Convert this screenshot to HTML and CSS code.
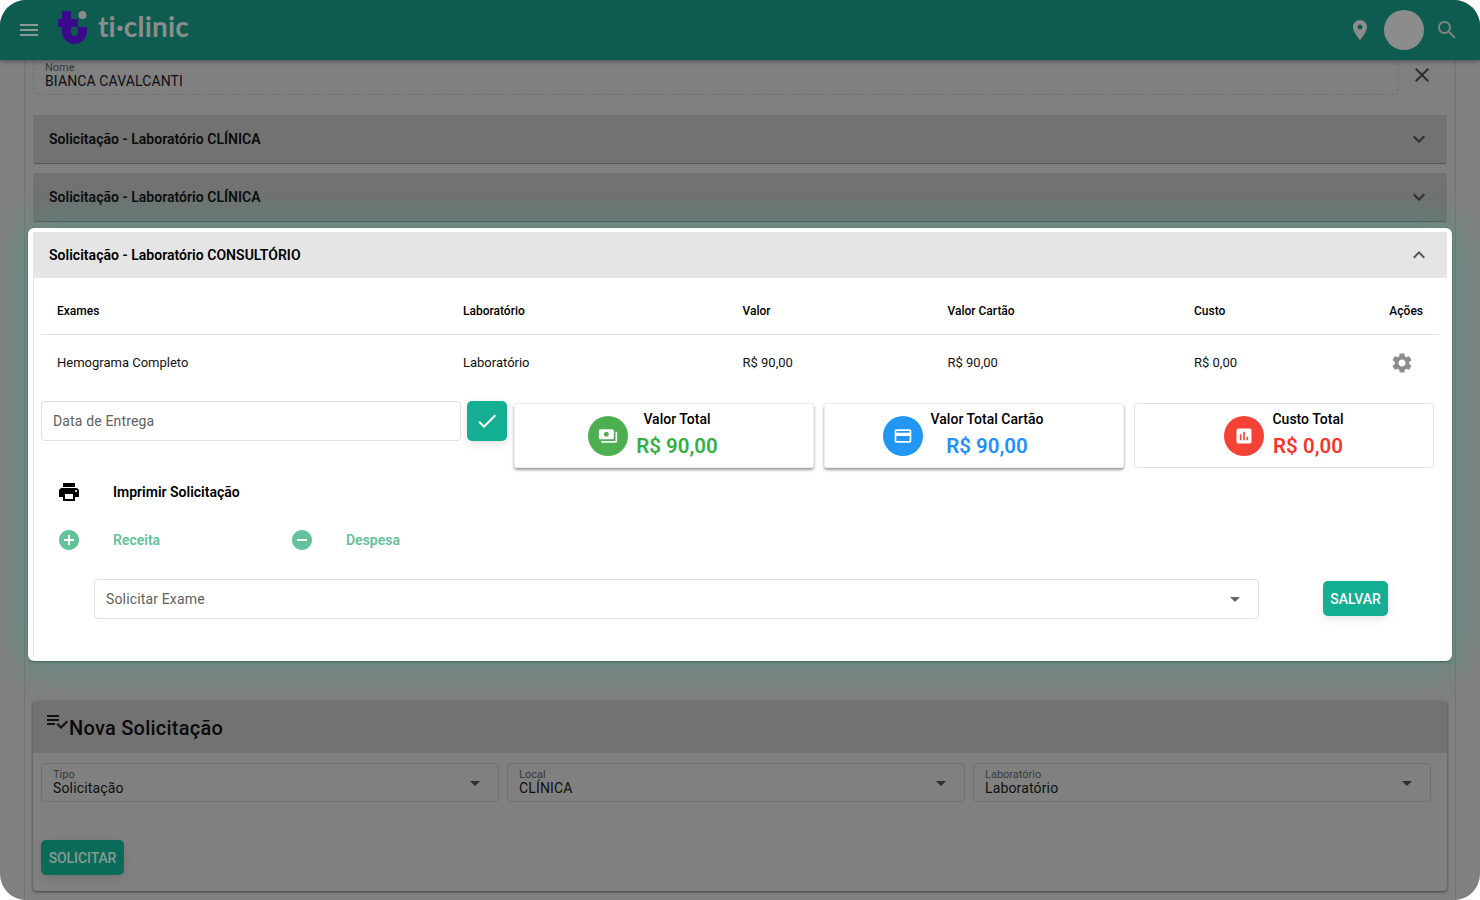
FILE: index.html
```html
<!DOCTYPE html>
<html lang="pt-BR">
  <head>
    <meta charset="UTF-8" />
    <title>ti-clinic</title>
    <link rel="stylesheet" href="styles.css">
  </head>
  <body>
    <div class="window">
      <header class="topbar">
        <svg class="icon menu-icon" viewBox="0 0 24 24"><path d="M3 18h18v-2H3v2zm0-5h18v-2H3v2zm0-7v2h18V6H3z"/></svg>
        <svg class="logo-mark" viewBox="0 0 29 33">
          <path d="M4 0h9v8h7v8h9v4.500a12.500 12.500 0 0 1-25 0V16H0V8h4z" fill="#3b0a8c"/>
          <path d="M13 16h7v5.500a3.500 3.500 0 0 1-7 0z" fill="#0d5c4f"/>
          <circle cx="24.500" cy="4" r="4" fill="#8c8c8c"/>
        </svg>
        <span class="logo-text">ti·clinic</span>
        <div class="topbar-right">
          <svg class="icon place-icon" viewBox="0 0 24 24"><path d="M12 2C8.130 2 5 5.130 5 9c0 5.250 7 13 7 13s7-7.750 7-13c0-3.870-3.130-7-7-7zm0 9.500c-1.380 0-2.500-1.120-2.500-2.500s1.120-2.500 2.500-2.500 2.500 1.120 2.500 2.500-1.120 2.500-2.500 2.500z"/></svg>
          <div class="avatar"></div>
          <svg class="icon search-icon" viewBox="0 0 24 24"><path d="M15.500 14h-.79l-.28-.27C15.410 12.590 16 11.110 16 9.500 16 5.910 13.090 3 9.500 3S3 5.910 3 9.500 5.910 16 9.500 16c1.610 0 3.090-.59 4.230-1.570l.27.28v.79l5 4.990L20.490 19l-4.990-5zm-6 0C7.010 14 5 11.990 5 9.500S7.010 5 9.500 5 14 7.010 14 9.500 11.990 14 9.500 14z"/></svg>
        </div>
      </header>

      <main class="content">
        <div class="patient-row">
          <div class="patient-field">
            <label>Nome</label>
            <div class="patient-name">BIANCA CAVALCANTI</div>
          </div>
          <svg class="icon close-icon" viewBox="0 0 24 24"><path d="M19 6.410L17.590 5 12 10.590 6.410 5 5 6.410 10.590 12 5 17.590 6.410 19 12 13.410 17.590 19 19 17.590 13.410 12z"/></svg>
        </div>

        <div class="acc-closed">
          <span>Solicitação - Laboratório CLÍNICA</span>
          <svg class="icon chev" viewBox="0 0 24 24"><path d="M16.590 8.590L12 13.170 7.410 8.590 6 10l6 6 6-6z"/></svg>
        </div>
        <div class="acc-closed">
          <span>Solicitação - Laboratório CLÍNICA</span>
          <svg class="icon chev" viewBox="0 0 24 24"><path d="M16.590 8.590L12 13.170 7.410 8.590 6 10l6 6 6-6z"/></svg>
        </div>

        <section class="acc-open">
          <div class="acc-open-header">
            <span>Solicitação - Laboratório CONSULTÓRIO</span>
            <svg class="icon chev" viewBox="0 0 24 24"><path d="M12 8l-6 6 1.410 1.410L12 10.830l4.590 4.580L18 14z"/></svg>
          </div>
          <div class="acc-open-body">
            <table class="exam-table">
              <thead>
                <tr>
                  <th class="col-exame">Exames</th>
                  <th class="col-lab">Laboratório</th>
                  <th class="col-valor">Valor</th>
                  <th class="col-cartao">Valor Cartão</th>
                  <th class="col-custo">Custo</th>
                  <th class="col-acoes">Ações</th>
                </tr>
              </thead>
              <tbody>
                <tr>
                  <td>Hemograma Completo</td>
                  <td>Laboratório</td>
                  <td>R$ 90,00</td>
                  <td>R$ 90,00</td>
                  <td>R$ 0,00</td>
                  <td class="col-acoes">
                    <svg class="gear" viewBox="0 0 24 24"><path d="M19.140 12.940c.04-.3.06-.61.06-.94 0-.32-.02-.64-.07-.94l2.030-1.580c.18-.14.23-.41.12-.61l-1.920-3.320c-.12-.22-.37-.29-.59-.22l-2.390.96c-.5-.38-1.030-.7-1.620-.94l-.36-2.540c-.04-.24-.24-.41-.48-.41h-3.840c-.24 0-.43.17-.47.41l-.36 2.540c-.59.24-1.130.57-1.620.94l-2.390-.96c-.22-.08-.47 0-.59.22L2.740 8.870c-.12.21-.08.47.12.61l2.030 1.580c-.05.3-.09.63-.09.94s.02.64.07.94l-2.030 1.580c-.18.14-.23.41-.12.61l1.920 3.320c.12.22.37.29.59.22l2.390-.96c.5.38 1.030.7 1.620.94l.36 2.540c.05.24.24.41.48.41h3.840c.24 0 .44-.17.47-.41l.36-2.540c.59-.24 1.130-.56 1.620-.94l2.390.96c.22.08.47 0 .59-.22l1.920-3.320c.12-.22.07-.47-.12-.61l-2.010-1.580zM12 15.600c-1.980 0-3.600-1.620-3.600-3.600s1.620-3.600 3.600-3.600 3.600 1.620 3.600 3.600-1.620 3.600-3.600 3.600z"/></svg>
                  </td>
                </tr>
              </tbody>
            </table>

            <div class="totals-row">
              <div class="date-input">Data de Entrega</div>
              <button class="check-btn">
                <svg viewBox="0 0 24 24"><path d="M9 16.170L4.830 12l-1.420 1.410L9 19 21 7l-1.410-1.410z"/></svg>
              </button>
              <div class="total-card raised">
                <div class="total-circle green">
                  <svg viewBox="0 0 24 24"><path d="M19 14V6c0-1.100-.9-2-2-2H3c-1.100 0-2 .9-2 2v8c0 1.100.9 2 2 2h14c1.100 0 2-.9 2-2zm-9-1c-1.660 0-3-1.340-3-3s1.340-3 3-3 3 1.340 3 3-1.340 3-3 3zm13-6v11c0 1.100-.9 2-2 2H4v-2h17V7h2z"/></svg>
                </div>
                <div class="total-text">
                  <div class="total-label">Valor Total</div>
                  <div class="total-value green-text">R$ 90,00</div>
                </div>
              </div>
              <div class="total-card raised">
                <div class="total-circle blue">
                  <svg viewBox="0 0 24 24"><path d="M20 4H4c-1.110 0-1.990.89-1.990 2L2 18c0 1.110.89 2 2 2h16c1.110 0 2-.89 2-2V6c0-1.110-.89-2-2-2zm0 14H4v-6h16v6zm0-10H4V6h16v2z"/></svg>
                </div>
                <div class="total-text">
                  <div class="total-label">Valor Total Cartão</div>
                  <div class="total-value blue-text">R$ 90,00</div>
                </div>
              </div>
              <div class="total-card">
                <div class="total-circle red">
                  <svg viewBox="0 0 24 24"><path d="M19 3H5c-1.100 0-2 .9-2 2v14c0 1.100.9 2 2 2h14c1.100 0 2-.9 2-2V5c0-1.100-.9-2-2-2zM9 17H7v-7h2v7zm4 0h-2V7h2v10zm4 0h-2v-4h2v4z"/></svg>
                </div>
                <div class="total-text">
                  <div class="total-label">Custo Total</div>
                  <div class="total-value red-text">R$ 0,00</div>
                </div>
              </div>
            </div>

            <div class="action-row print-row">
              <svg class="action-icon black" viewBox="0 0 24 24"><path d="M19 8H5c-1.660 0-3 1.340-3 3v6h4v4h12v-4h4v-6c0-1.660-1.340-3-3-3zm-3 11H8v-5h8v5zm3-7c-.55 0-1-.45-1-1s.45-1 1-1 1 .45 1 1-.45 1-1 1zm-1-9H6v4h12V3z"/></svg>
              <span class="action-label">Imprimir Solicitação</span>
            </div>
            <div class="action-row money-row">
              <div class="money-item">
                <svg class="action-icon mint" viewBox="0 0 24 24"><path d="M12 2C6.480 2 2 6.480 2 12s4.480 10 10 10 10-4.480 10-10S17.520 2 12 2zm5 11h-4v4h-2v-4H7v-2h4V7h2v4h4v2z"/></svg>
                <span class="action-label mint-text">Receita</span>
              </div>
              <div class="money-item">
                <svg class="action-icon mint" viewBox="0 0 24 24"><path d="M12 2C6.480 2 2 6.480 2 12s4.480 10 10 10 10-4.480 10-10S17.520 2 12 2zm5 11H7v-2h10v2z"/></svg>
                <span class="action-label mint-text">Despesa</span>
              </div>
            </div>

            <div class="request-row">
              <div class="request-select">
                <span>Solicitar Exame</span>
                <svg class="icon drop" viewBox="0 0 24 24"><path d="M7 10l5 5 5-5z"/></svg>
              </div>
              <button class="save-btn">SALVAR</button>
            </div>
          </div>
        </section>

        <section class="new-card">
          <div class="new-card-header">
            <svg class="icon list-icon" viewBox="0 0 24 24"><path d="M14 10H2v2h12v-2zm0-4H2v2h12V6zM2 16h8v-2H2v2zm19.500-4.500L23 13l-6.990 7-4.510-4.500L13 14l3.010 3 5.490-5.500z"/></svg>
            <h2>Nova Solicitação</h2>
          </div>
          <div class="new-card-body">
            <div class="select-grid">
              <div class="dim-select">
                <div>
                  <label>Tipo</label>
                  <div class="dim-value">Solicitação</div>
                </div>
                <svg class="icon drop dark" viewBox="0 0 24 24"><path d="M7 10l5 5 5-5z"/></svg>
              </div>
              <div class="dim-select">
                <div>
                  <label>Local</label>
                  <div class="dim-value">CLÍNICA</div>
                </div>
                <svg class="icon drop dark" viewBox="0 0 24 24"><path d="M7 10l5 5 5-5z"/></svg>
              </div>
              <div class="dim-select">
                <div>
                  <label>Laboratório</label>
                  <div class="dim-value">Laboratório</div>
                </div>
                <svg class="icon drop dark" viewBox="0 0 24 24"><path d="M7 10l5 5 5-5z"/></svg>
              </div>
            </div>
            <button class="request-btn">SOLICITAR</button>
          </div>
        </section>
      </main>
    </div>
  </body>
</html>
```

FILE: styles.css
```css
html,
body {
  height: 100%;
  margin: 0;
  background: #fff;
}
body {
  font-family: Roboto, "Noto Sans", sans-serif;
  color: #000;
}
button {
  font-family: inherit;
  border: none;
}
label {
  display: block;
}
.window {
  width: 1480px;
  height: 900px;
  background: #808080;
  border-radius: 26px;
  overflow: hidden;
}
.icon {
  display: block;
  width: 24px;
  height: 24px;
  flex: none;
}

/* topo */
.topbar {
  position: relative;
  z-index: 3;
  display: flex;
  align-items: center;
  height: 60px;
  padding: 0 21px 0 17px;
  background: #0d5c4f;
  box-shadow: 0 2px 4px rgba(0, 0, 0, 0.3);
}
.menu-icon {
  fill: #8c9a96;
}
.logo-mark {
  width: 29px;
  height: 33px;
  margin: -5px 0 0 17px;
}
.logo-text {
  margin: -8px 0 0 11px;
  font-family: Lato, sans-serif;
  font-weight: 700;
  font-size: 28px;
  letter-spacing: 0.2px;
  color: #8c8c8c;
}
.topbar-right {
  display: flex;
  align-items: center;
  margin-left: auto;
}
.place-icon {
  fill: #8c8c8c;
  width: 24px;
  height: 24px;
}
.avatar {
  width: 40px;
  height: 40px;
  margin: 0 11px 0 12px;
  border-radius: 50%;
  background: #8c8c8c;
}
.search-icon {
  fill: #808080;
}

/* conteudo */
.content {
  height: 840px;
  margin: 0 24px;
  padding: 0 8px;
  border-left: 1px solid #737373;
  border-right: 1px solid #737373;
  box-sizing: border-box;
  width: 1432px;
}
.patient-row {
  display: flex;
  align-items: center;
  height: 35px;
  margin-bottom: 20px;
}
.patient-field {
  flex: 1;
  height: 35px;
  padding: 1px 11px 0;
  border: 1px dashed #6f6f6f;
  border-top: none;
  border-radius: 0 0 4px 4px;
  box-sizing: border-box;
  margin-right: 11px;
}
.patient-field label {
  margin-bottom: -1px;
  font-size: 11px;
  line-height: 13px;
  color: #3a3a3a;
}
.patient-name {
  font-size: 14px;
  line-height: 16px;
  letter-spacing: 0.12px;
  color: #0f0f0f;
}
.close-icon {
  fill: #2e2e2e;
  margin: -5px 13px 0 0;
}
.acc-closed {
  display: flex;
  align-items: center;
  justify-content: space-between;
  height: 48px;
  margin-bottom: 10px;
  padding: 0 16px;
  background: #727272;
  border-radius: 2px;
  box-shadow: 0 2px 1px -1px rgba(0, 0, 0, 0.35);
  font-size: 14px;
  font-weight: 600;
  letter-spacing: 0.03px;
  color: #0a0a0a;
}
.acc-closed .chev {
  fill: #2e2e2e;
}

/* painel aberto */
.acc-open {
  position: relative;
  z-index: 2;
  margin: -3px -5px 0;
  background: #fff;
  border: 4px solid #fff;
  border-width: 4px 5px;
  border-radius: 6px;
  box-shadow: 0 0 36px 8px rgba(30, 170, 140, 0.3), 0 1px 2px rgba(0, 50, 40, 0.5);
}
.acc-open-header {
  display: flex;
  align-items: center;
  justify-content: space-between;
  height: 46px;
  padding: 0 16px;
  background: #e5e5e5;
  font-size: 14px;
  font-weight: 600;
  letter-spacing: 0.03px;
}
.acc-open-header .chev {
  fill: #555;
}
.acc-open-body {
  height: 379px;
  padding: 9px 8px 0 7px;
  border-left: 1px solid #e4e4e4;
  box-sizing: border-box;
}
.exam-table {
  width: 100%;
  border-collapse: collapse;
  table-layout: fixed;
}
.exam-table th {
  height: 47px;
  padding: 2px 16px 0;
  box-sizing: border-box;
  text-align: left;
  font-size: 12px;
  font-weight: 500;
  border-bottom: 1px solid #e0e0e0;
}
.exam-table td {
  height: 57px;
  padding: 0 16px;
  box-sizing: border-box;
  font-size: 13px;
  color: #111;
}
.col-exame {
  width: 406px;
}
.col-lab {
  width: 279.500px;
}
.col-valor {
  width: 205px;
}
.col-cartao {
  width: 246.500px;
}
.col-custo {
  width: 180px;
}
.exam-table .col-acoes {
  text-align: right;
}
.gear {
  display: inline-block;
  vertical-align: middle;
  width: 24px;
  height: 24px;
  margin-right: 9px;
  fill: #8c8c8c;
}

.totals-row {
  display: flex;
  align-items: flex-start;
  margin-top: 10px;
}
.date-input {
  width: 420px;
  height: 40px;
  padding: 0 11px;
  border: 1px solid #e0e0e0;
  border-radius: 4px;
  box-sizing: border-box;
  font-size: 14px;
  line-height: 38px;
  letter-spacing: 0.15px;
  color: #616161;
}
.check-btn {
  width: 40px;
  height: 40px;
  margin-left: 6px;
  padding: 8px;
  background: #14ae93;
  border-radius: 5px;
  box-shadow: 0 3px 8px rgba(0, 0, 0, 0.12);
  fill: #fff;
}
.check-btn svg {
  display: block;
}
.total-card {
  display: flex;
  align-items: center;
  justify-content: center;
  gap: 8px;
  width: 300px;
  height: 65px;
  margin: 2px 0 0 10px;
  border: 1px solid #e3e3e3;
  border-radius: 3px;
  box-sizing: border-box;
}
.total-card.raised {
  padding-right: 22px;
  border-color: #eee;
  box-shadow: 0 2px 3px rgba(0, 0, 0, 0.4);
}
.total-card:nth-child(3) {
  margin-left: 7px;
}
.total-circle {
  display: flex;
  align-items: center;
  justify-content: center;
  width: 40px;
  height: 40px;
  border-radius: 50%;
  fill: #fff;
}
.total-circle svg {
  width: 20px;
  height: 20px;
}
.green {
  background: #4caf50;
}
.blue {
  background: #2196f3;
}
.red {
  background: #f44336;
}
.total-text {
  margin-top: -1px;
  text-align: center;
}
.total-label {
  font-size: 14px;
  line-height: 16px;
  font-weight: 500;
}
.total-value {
  margin-top: 7px;
  font-size: 20.500px;
  line-height: 25px;
  font-weight: 600;
}
.green-text {
  color: #35b044;
}
.blue-text {
  color: #1e90ff;
}
.red-text {
  color: #f5362a;
}

.action-row {
  display: flex;
  align-items: center;
  height: 24px;
}
.print-row {
  margin: 12px 0 0 16px;
}
.money-row {
  margin: 24px 0 0 16px;
}
.money-item {
  display: flex;
  align-items: center;
  width: 233px;
}
.action-icon {
  width: 24px;
  height: 24px;
  flex: none;
  margin-right: 32px;
}
.black {
  fill: #000;
}
.mint {
  fill: #63c29a;
}
.action-label {
  font-size: 14px;
  font-weight: 600;
}
.mint-text {
  color: #63c29a;
}
.request-row {
  display: flex;
  align-items: flex-start;
  margin: 27px 0 0 53px;
}
.request-select {
  display: flex;
  align-items: center;
  justify-content: space-between;
  width: 1165px;
  height: 40px;
  padding: 0 11px;
  border: 1px solid #e0e0e0;
  border-radius: 4px;
  box-sizing: border-box;
  font-size: 14px;
  letter-spacing: 0.15px;
  color: #616161;
}
.drop {
  fill: #666;
}
.drop.dark {
  fill: #2e2e2e;
}
.save-btn {
  width: 65px;
  height: 35px;
  margin: 2px 0 0 64px;
  background: #14ae93;
  border-radius: 5px;
  box-shadow: 0 3px 10px rgba(0, 0, 0, 0.1);
  color: #fff;
  font-size: 14px;
  font-weight: 500;
}

/* nova solicitacao */
.new-card {
  height: 190px;
  margin-top: 40px;
  border-radius: 4px;
  background: #808080;
  box-shadow: 0 1px 3px rgba(0, 0, 0, 0.5);
}
.new-card-header {
  display: flex;
  height: 52px;
  padding: 0 12px;
  background: #727272;
  border-radius: 4px 4px 0 0;
}
.list-icon {
  fill: #111;
  margin: 8px 0 0 0;
  width: 24px;
}
.new-card-header h2 {
  margin: 0;
  font-size: 20px;
  line-height: 54px;
  font-weight: 500;
  letter-spacing: 0.25px;
  color: #0a0a0a;
}
.new-card-body {
  padding: 10px 8px 0;
}
.select-grid {
  display: grid;
  grid-template-columns: repeat(3, 458px);
  gap: 8px;
  padding-right: 8px;
}
.dim-select {
  display: flex;
  align-items: center;
  justify-content: space-between;
  height: 39px;
  padding: 0 11px;
  border: 1px solid #707070;
  border-radius: 4px;
  box-sizing: border-box;
}
.dim-select label {
  font-size: 11px;
  line-height: 11px;
  color: #3a3a3a;
}
.dim-value {
  font-size: 14px;
  line-height: 16px;
  letter-spacing: 0.15px;
  color: #0f0f0f;
}
.request-btn {
  display: block;
  width: 83px;
  height: 35px;
  margin-top: 38px;
  background: #0b6b59;
  border-radius: 5px;
  box-shadow: 0 3px 10px rgba(0, 0, 0, 0.1);
  color: #8a9a94;
  font-size: 14px;
  font-weight: 500;
  letter-spacing: -0.1px;
}
```
